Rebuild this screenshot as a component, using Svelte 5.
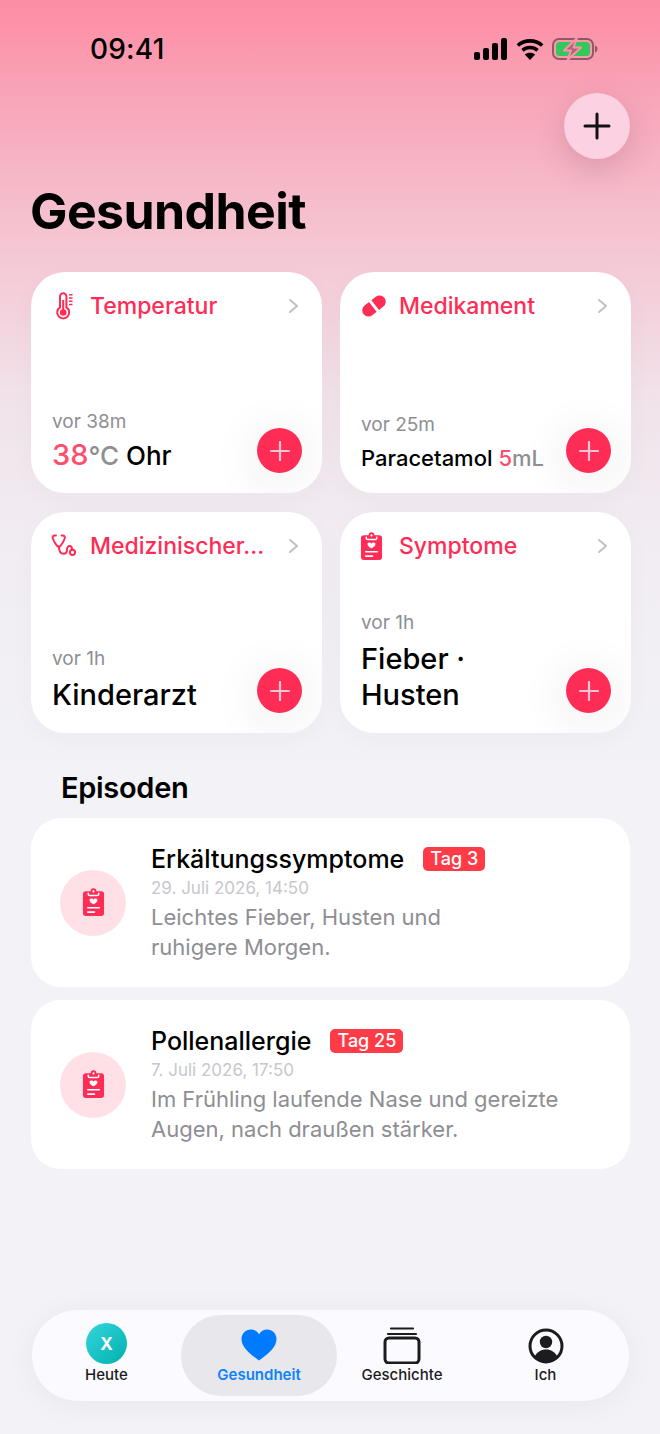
<script>
  const cards = [
    { key: 'temp', title: 'Temperatur', ago: 'vor 38m' },
    { key: 'med', title: 'Medikament', ago: 'vor 25m' },
    { key: 'doc', title: 'Medizinischer...', ago: 'vor 1h' },
    { key: 'sym', title: 'Symptome', ago: 'vor 1h' }
  ];

  const episodes = [
    { title: 'Erkältungssymptome', tag: 'Tag 3', date: '29. Juli 2026, 14:50', note: 'Leichtes Fieber, Husten und\nruhigere Morgen.' },
    { title: 'Pollenallergie', tag: 'Tag 25', date: '7. Juli 2026, 17:50', note: 'Im Frühling laufende Nase und gereizte\nAugen, nach draußen stärker.' }
  ];
</script>

{#snippet clipboard(size)}
  <svg width={size} height={size * 1.22} viewBox="0 0 24 29">
    <path fill="#ff2d55" fill-rule="evenodd" d="M9 3.2a3 3 0 0 1 6 0h5a3 3 0 0 1 3 3V26a3 3 0 0 1-3 3H4a3 3 0 0 1-3-3V6.200a3 3 0 0 1 3-3z" />
    <path fill="none" stroke="#fff" stroke-width="1.6" stroke-linecap="round" d="M6.500 5.400v.8a1.600 1.600 0 0 0 1.600 1.600h7.800a1.600 1.600 0 0 0 1.600-1.600v-.8" />
    <circle cx="12" cy="3.400" r="1.100" fill="#fff" />
    <path fill="#fff" d="M9.200 10.300c1.300 0 2.200.7 2.800 1.500.6-.8 1.500-1.500 2.800-1.500 1.500 0 2.400 1.100 2.400 2.300 0 2-2.400 3.700-5.200 5.300-2.800-1.600-5.200-3.300-5.200-5.300 0-1.200.9-2.300 2.400-2.300z" transform="translate(2.400 2.500) scale(.8)" />
    <path fill="none" stroke="#fff" stroke-width="1.700" stroke-linecap="round" d="M6 20.500h12M6 25h7" />
  </svg>
{/snippet}

{#snippet cardIcon(key)}
  {#if key === 'temp'}
    <svg width="28" height="28" viewBox="0 0 28 28">
      <path fill="none" stroke="#ff2d55" stroke-width="2" d="M9 4.500a3.200 3.200 0 0 1 6.400 0v10.900a6 6 0 1 1-6.400 0z" />
      <circle cx="12.200" cy="20.500" r="3.300" fill="#ff2d55" />
      <path stroke="#ff2d55" stroke-width="2" d="M12.200 8v11" />
      <path stroke="#ff2d55" stroke-width="1.500" d="M18 2.800h3.500M18 6h3.500M18 9.200h3.500M18 12.400h3.500" />
    </svg>
  {:else if key === 'med'}
    <svg width="28" height="28" viewBox="0 0 28 28">
      <g transform="rotate(-38 14 14)">
        <path fill="#ff2d55" d="M13 7.800H7.500a6.200 6.200 0 0 0 0 12.400H13z" transform="translate(-.5 0)" />
        <path fill="#ff2d55" d="M15 7.800h5.500a6.200 6.200 0 0 1 0 12.400H15z" transform="translate(.5 0)" />
      </g>
    </svg>
  {:else if key === 'doc'}
    <svg width="28" height="28" viewBox="0 0 28 28">
      <path fill="none" stroke="#ff2d55" stroke-width="2" stroke-linecap="round" stroke-linejoin="round" d="M5 3.500H3.500C2 3.500 1.200 5 1.800 6.500c.8 2.200 2.500 5.500 4.200 7.200 1 1 2.600 1 3.600 0 1.500-1.700 3.300-5 4.100-7.200.6-1.500-.2-3-1.700-3h-1.500" />
      <path fill="none" stroke="#ff2d55" stroke-width="2" stroke-linecap="round" d="M7.800 14.500c.2 4.500 1.700 7.300 4.700 7.300 2.300 0 3.500-1.500 3.500-4s1-3.800 2.600-3.800c1.500 0 2.400 1 2.400 3" />
      <circle cx="21.500" cy="20.300" r="2.600" fill="none" stroke="#ff2d55" stroke-width="2" />
    </svg>
  {:else}
    {@render clipboard(23)}
  {/if}
{/snippet}

<div class="screen">
  <header class="status">
    <span class="time">09:41</span>
    <div class="status-icons">
      <svg width="34" height="22" viewBox="0 0 34 22">
        <rect x="0" y="14" width="6" height="8" rx="2" />
        <rect x="9" y="10" width="6" height="12" rx="2" />
        <rect x="18" y="5" width="6" height="17" rx="2" />
        <rect x="27" y="0" width="6" height="22" rx="2" />
      </svg>
      <svg width="28" height="22" viewBox="0 0 28 22">
        <path fill="none" stroke="#000" stroke-width="3.600" d="M1.800 7.500c7-6.200 17.400-6.200 24.400 0M6.500 12.300c4.400-3.800 10.600-3.800 15 0" />
        <path d="M14 22l-5.200-5.400c3-2.400 7.400-2.400 10.400 0z" />
      </svg>
      <svg width="46" height="22" viewBox="0 0 46 22">
        <rect x="1" y="1" width="40" height="20" rx="6" fill="none" stroke="#000" stroke-opacity=".42" stroke-width="2" />
        <rect x="4" y="4" width="34" height="14" rx="3.500" fill="#34c759" />
        <path d="M43 7.500c1.600.4 2.500 1.800 2.500 3.500s-.9 3.100-2.500 3.500z" fill="#000" fill-opacity=".42" />
        <path d="M25 0L12 12.500h7L15.500 22 29 9.500h-7.500z" fill="#b6637a" stroke="#fb93a9" stroke-width="2" stroke-linejoin="round" />
      </svg>
    </div>
  </header>

  <div class="top-action">
    <button class="fab" aria-label="Hinzufügen">
      <svg width="28" height="28" viewBox="0 0 28 28">
        <path stroke="#111" stroke-width="3" stroke-linecap="round" d="M14 2v24M2 14h24" />
      </svg>
    </button>
  </div>

  <h1>Gesundheit</h1>

  <section class="grid">
    {#each cards as card}
      <article class="card {card.key}">
        <div class="card-head">
          <span class="card-icon">{@render cardIcon(card.key)}</span>
          <span class="card-title">{card.title}</span>
          <svg class="chevron" width="11" height="16" viewBox="0 0 11 16">
            <path fill="none" stroke="#c0c0c4" stroke-width="2" stroke-linecap="round" stroke-linejoin="round" d="M2 2l7 6-7 6" />
          </svg>
        </div>
        <div class="card-foot">
          <div class="card-text">
            <div class="ago">{card.ago}</div>
            {#if card.key === 'temp'}
              <div class="value"><span class="num">38</span><span class="unit">°C</span> Ohr</div>
            {:else if card.key === 'med'}
              <div class="value small">Paracetamol <span class="num">5</span><span class="unit">mL</span></div>
            {:else if card.key === 'doc'}
              <div class="value large">Kinderarzt</div>
            {:else}
              <div class="value large">Fieber ·<br />Husten</div>
            {/if}
          </div>
          <button class="add" aria-label="Eintrag hinzufügen">
            <svg width="20" height="20" viewBox="0 0 20 20">
              <path stroke="#ffc3d6" stroke-width="2.200" stroke-linecap="round" d="M10 1v18M1 10h18" />
            </svg>
          </button>
        </div>
      </article>
    {/each}
  </section>

  <h2>Episoden</h2>

  <section class="episodes">
    {#each episodes as ep}
      <article class="episode">
        <div class="ep-icon">{@render clipboard(23)}</div>
        <div class="ep-body">
          <div class="ep-head">
            <span class="ep-title">{ep.title}</span>
            <span class="tag">{ep.tag}</span>
          </div>
          <div class="ep-date">{ep.date}</div>
          <div class="ep-note">{ep.note}</div>
        </div>
      </article>
    {/each}
  </section>

  <nav class="tabs">
    <div class="tab">
      <span class="avatar">X</span>
      <span class="tab-label">Heute</span>
    </div>
    <div class="tab active">
      <svg width="36" height="32" viewBox="0 0 36 32">
        <path fill="#007aff" d="M18 31.500C6.500 23.500.5 17 .5 10 .5 4.500 4.800.5 9.800.5c3.500 0 6.300 1.700 8.200 4.700C19.900 2.200 22.700.5 26.200.5c5 0 9.300 4 9.300 9.500 0 7-6 13.500-17.500 21.500z" />
      </svg>
      <span class="tab-label">Gesundheit</span>
    </div>
    <div class="tab">
      <svg width="38" height="38" viewBox="0 0 38 38">
        <rect x="2" y="12" width="34" height="25" rx="4" fill="none" stroke="#1c1c1e" stroke-width="3" />
        <path stroke="#1c1c1e" stroke-width="2.200" stroke-linecap="round" d="M5 8h28M8 2.500h22" />
      </svg>
      <span class="tab-label">Geschichte</span>
    </div>
    <div class="tab">
      <svg width="36" height="36" viewBox="0 0 36 36">
        <circle cx="18" cy="18" r="16" fill="none" stroke="#1c1c1e" stroke-width="3" />
        <circle cx="18" cy="14" r="6.200" fill="#1c1c1e" />
        <path fill="#1c1c1e" d="M6.500 29c2.200-5 6.500-7.500 11.500-7.500S27.300 24 29.500 29c-3 3-7 5-11.500 5s-8.500-2-11.500-5z" />
      </svg>
      <span class="tab-label">Ich</span>
    </div>
  </nav>
</div>

<style>
  :global(body) {
    margin: 0;
    background: #f2f2f7;
  }

  .screen {
    width: 660px;
    height: 1434px;
    box-sizing: border-box;
    padding: 0 30px;
    display: flex;
    flex-direction: column;
    overflow: hidden;
    font-family: Inter, "Liberation Sans", sans-serif;
    background: linear-gradient(180deg, #fd8ca4 0, #f8a6b9 100px, #f5c5d2 240px, #f1e3ea 400px, #f1ecf2 530px, #f2f2f7 780px);
    color: #000;
  }

  button {
    border: 0;
    padding: 0;
    display: flex;
    align-items: center;
    justify-content: center;
    border-radius: 50%;
  }

  .status {
    display: flex;
    justify-content: space-between;
    align-items: center;
    height: 34px;
    margin-top: 32px;
    padding: 0 32px 0 60px;
  }

  .time {
    font-size: 28px;
    font-weight: 500;
    letter-spacing: 0.2px;
  }

  .status-icons {
    display: flex;
    align-items: center;
    gap: 8px;
  }

  .top-action {
    display: flex;
    justify-content: flex-end;
    margin-top: 27px;
  }

  .fab {
    width: 66px;
    height: 66px;
    background: #fcd1e2;
    box-shadow: 0 10px 30px rgba(120, 60, 80, 0.22);
  }

  h1 {
    margin: 22px 0 0;
    font-size: 50px;
    line-height: 60px;
    font-weight: 700;
    letter-spacing: -0.6px;
  }

  .grid {
    display: grid;
    grid-template-columns: 291px 291px;
    grid-auto-rows: 221px;
    column-gap: 18px;
    row-gap: 19px;
    margin: 31px 0 0 1px;
  }

  .card {
    background: #fff;
    border-radius: 34px;
    padding: 20px 21px 0;
    box-sizing: border-box;
    display: flex;
    flex-direction: column;
    justify-content: space-between;
    box-shadow: 0 6px 24px rgba(90, 60, 80, 0.03);
    overflow: hidden;
  }

  .card-head {
    display: flex;
    align-items: center;
    height: 28px;
  }

  .card-icon {
    width: 39px;
    display: flex;
    justify-content: center;
    margin-left: -1px;
    margin-right: 0;
    flex: none;
    justify-content: flex-start;
  }

  .card-title {
    flex: 1;
    color: #ff2d55;
    font-size: 23px;
    font-weight: 500;
    white-space: nowrap;
  }

  .chevron {
    margin-right: 2px;
  }

  .card-foot {
    display: flex;
    justify-content: space-between;
    align-items: flex-end;
    padding-bottom: 20px;
  }

  .card-text {
    min-width: 0;
  }

  .ago {
    font-size: 19px;
    line-height: 24px;
    color: #8e8e93;
  }

  .value {
    margin-top: 8px;
    font-size: 26px;
    line-height: 34px;
    font-weight: 500;
    white-space: nowrap;
  }

  .num {
    color: #ff4d6d;
  }

  .unit {
    color: #8e8e93;
  }

  .card.temp .num {
    font-size: 29px;
  }

  .card.temp .value {
    margin-bottom: 0;
    margin-top: 4px;
  }

  .card.med .ago {
    margin-bottom: 4px;
  }

  .value.small {
    font-size: 22px;
    line-height: 30px;
    margin-bottom: 0;
    margin-top: 6px;
  }

  .value.large {
    font-size: 29px;
    line-height: 36px;
    margin-top: 6px;
  }

  .add {
    width: 45px;
    height: 45px;
    flex: none;
    background: #ff2d55;
    box-shadow: 0 6px 40px 12px rgba(60, 40, 60, 0.05);
    margin-right: -1px;
    margin-bottom: 0;
  }

  h2 {
    margin: 37px 0 0 31px;
    font-size: 29px;
    line-height: 36px;
    font-weight: 600;
    letter-spacing: -0.3px;
  }

  .episodes {
    display: flex;
    flex-direction: column;
    gap: 13px;
    margin: 12px 0 0 1px;
  }

  .episode {
    width: 599px;
    height: 169px;
    box-sizing: border-box;
    background: #fff;
    border-radius: 30px;
    padding: 0 29px;
    display: flex;
    align-items: center;
    gap: 25px;
  }

  .ep-icon {
    width: 66px;
    height: 66px;
    flex: none;
    border-radius: 50%;
    background: #ffe0e6;
    display: flex;
    align-items: center;
    justify-content: center;
  }

  .ep-head {
    display: flex;
    align-items: center;
    gap: 19px;
    height: 30px;
  }

  .ep-title {
    font-size: 25px;
    font-weight: 500;
    white-space: nowrap;
  }

  .tag {
    background: #ff3b47;
    color: #fff;
    font-size: 18px;
    font-weight: 500;
    line-height: 24px;
    padding: 0 7px;
    border-radius: 5px;
  }

  .ep-date {
    margin-top: 3px;
    font-size: 17px;
    line-height: 22px;
    color: #c7c7cc;
  }

  .ep-note {
    margin-top: 3px;
    font-size: 22px;
    line-height: 30px;
    color: #8e8e93;
    white-space: pre-line;
  }

  .tabs {
    display: grid;
    grid-template-columns: 149px 156px 130px 157px;
    align-items: stretch;
    width: 597px;
    height: 91px;
    box-sizing: border-box;
    margin: auto 0 33px 2px;
    padding: 5px 0 5px 0;
    background: #fbfaff;
    border-radius: 46px;
    box-shadow: 0 4px 30px rgba(0, 0, 0, 0.05);
  }

  .tab {
    display: flex;
    flex-direction: column;
    align-items: center;
    justify-content: flex-end;
    gap: 1px;
    padding-bottom: 11px;
  }

  .tab svg {
    flex: none;
  }

  .tab.active {
    background: #e8e7ec;
    border-radius: 40px;
    color: #007aff;
    justify-content: space-between;
    padding-top: 14px;
  }

  .tab-label {
    font-size: 15px;
    line-height: 20px;
    font-weight: 500;
    color: #1c1c1e;
  }

  .tab.active .tab-label {
    color: #0a84ff;
    font-weight: 600;
  }

  .avatar {
    width: 41px;
    height: 41px;
    border-radius: 50%;
    background: linear-gradient(135deg, #35d6dc, #00b0ae);
    color: #fff;
    font-weight: 700;
    font-size: 17px;
    display: flex;
    align-items: center;
    justify-content: center;
  }
</style>
